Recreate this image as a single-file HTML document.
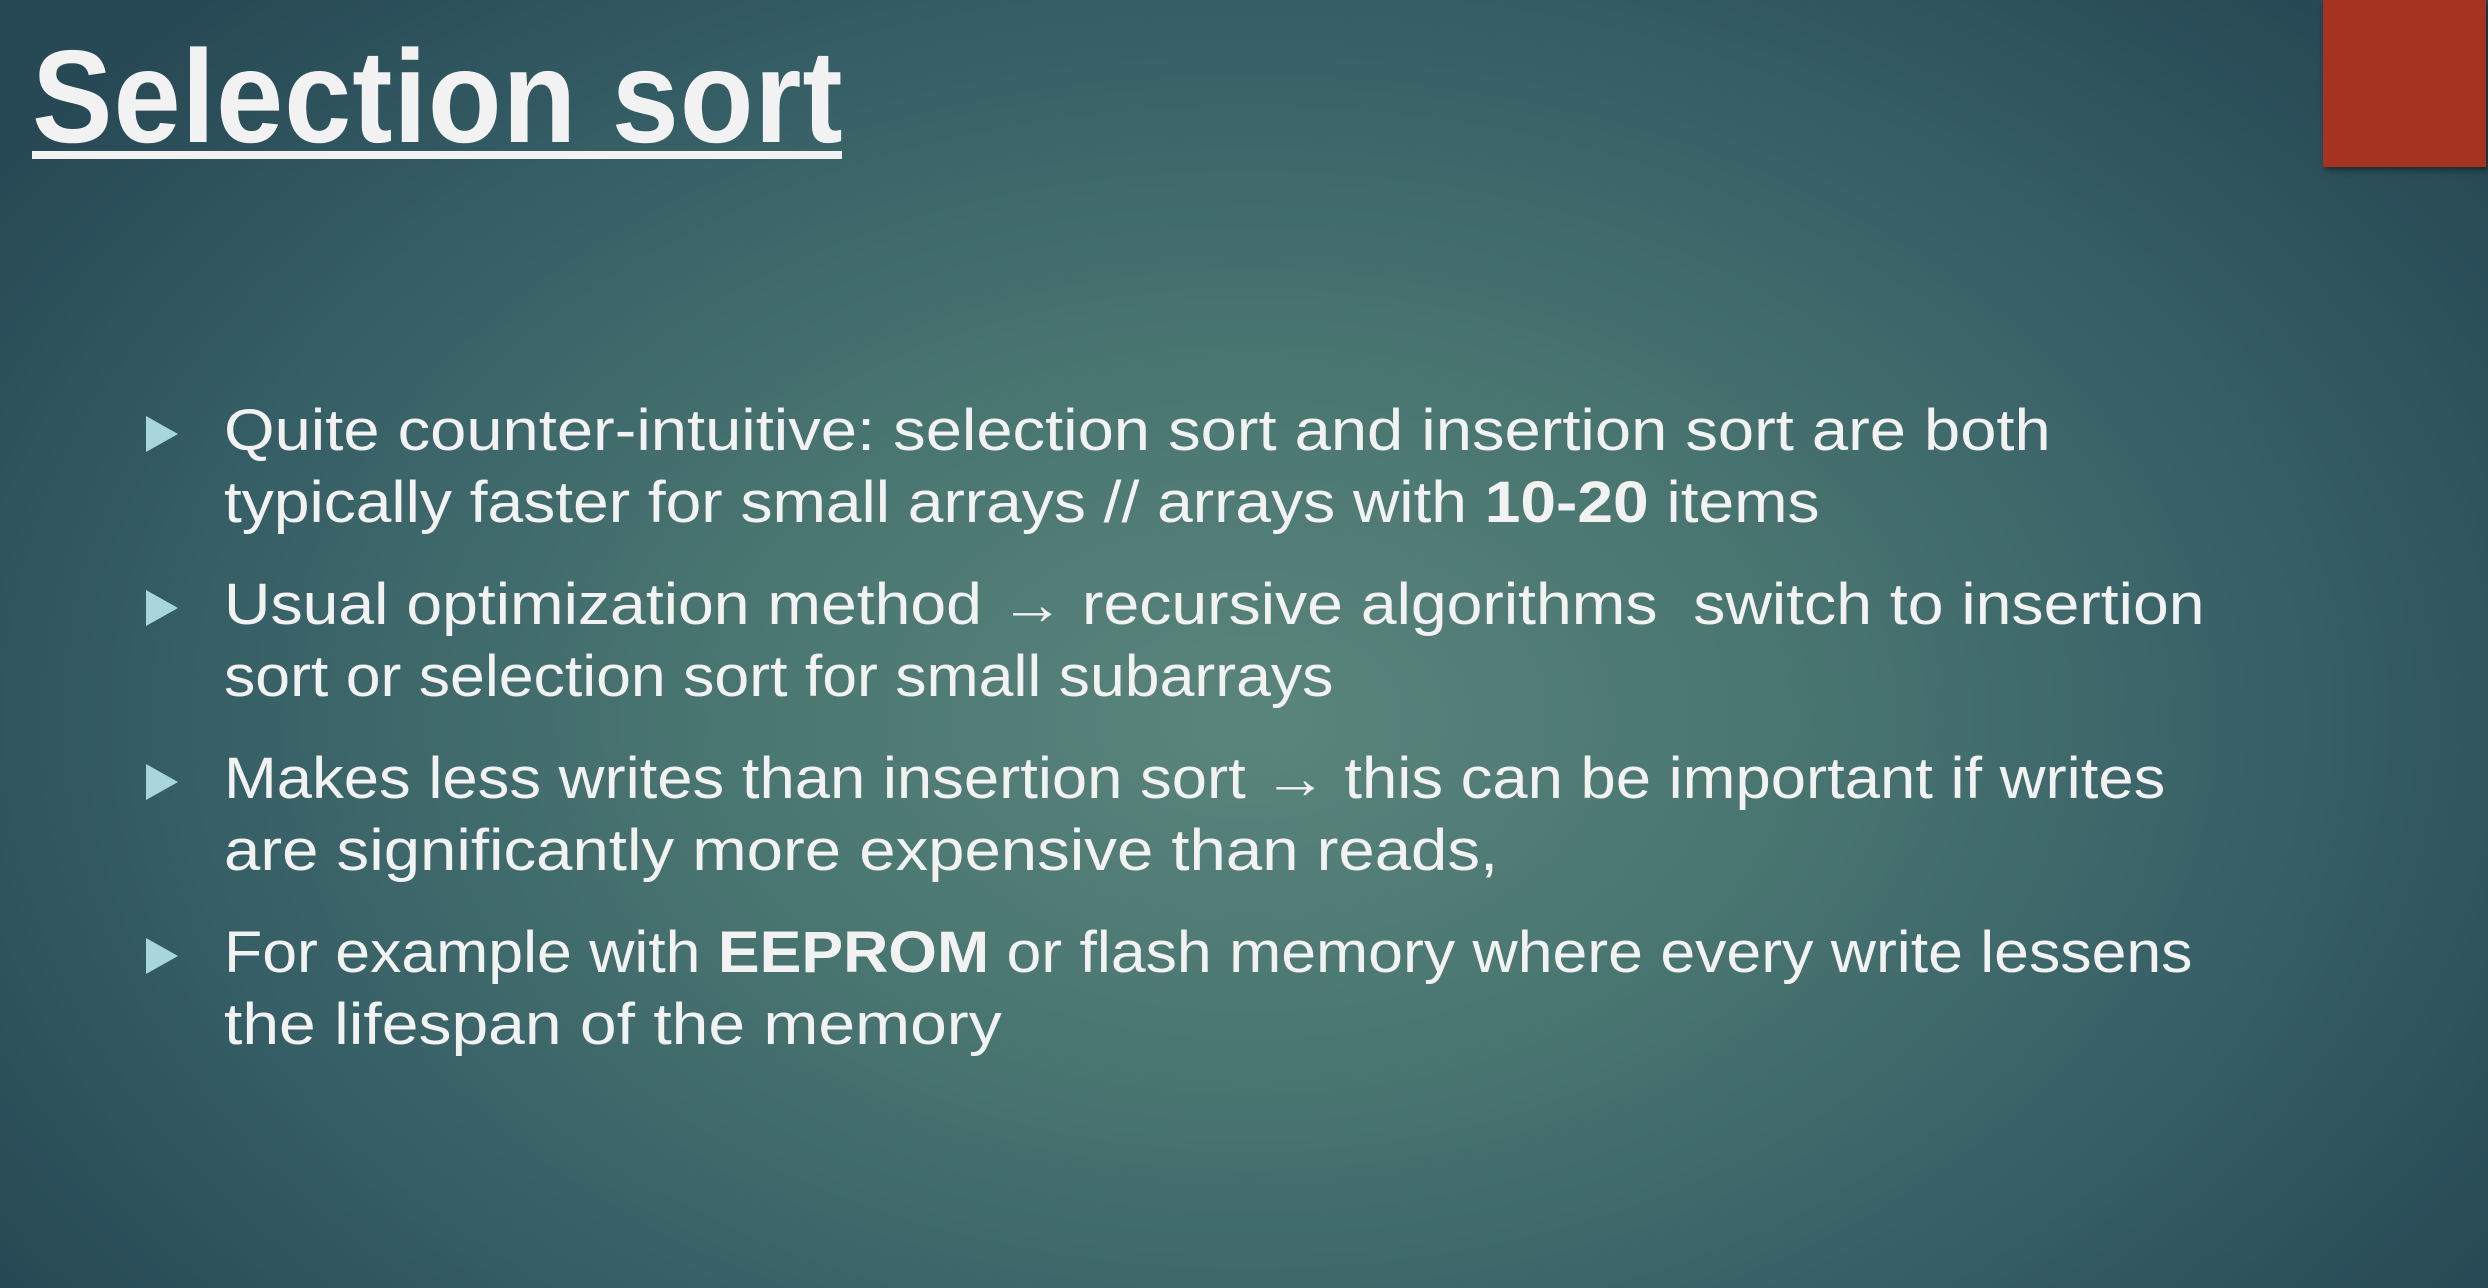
<!DOCTYPE html>
<html><head><meta charset="utf-8"><style>
html,body{margin:0;padding:0}
body{width:2488px;height:1288px;overflow:hidden;position:relative;
background:radial-gradient(ellipse 1500px 1000px at 1250px 720px,#5a857c 0%,#4a7671 35%,#365f66 70%,#274955 100%);
font-family:"Liberation Sans",sans-serif;color:#f2f2f2}
.t{position:absolute;left:32px;top:22px;font-size:132px;line-height:150px;font-weight:bold;white-space:nowrap;letter-spacing:1px;transform:scaleX(0.915);transform-origin:0 0}
.ul{position:absolute;left:32px;top:151px;width:810px;height:8px;background:#f2f2f2}
.red{position:absolute;left:2323px;top:0;width:163px;height:167px;background:#a63321;box-shadow:2px 3px 6px rgba(0,0,0,.45)}
.l{position:absolute;left:224px;font-size:58px;line-height:72px;white-space:nowrap;transform-origin:0 0}
.b{position:absolute;left:146px;width:0;height:0;border-top:18px solid transparent;border-bottom:18px solid transparent;border-left:32px solid #a9d6da}
</style></head><body>
<div class="t">Selection sort</div>
<div class="ul"></div>
<div class="red"></div>
<div class="b" style="top:416px"></div>
<div class="l" style="top:395px;transform:scaleX(1.122)">Quite counter-intuitive: selection sort and insertion sort are both</div>
<div class="l" style="top:467px;transform:scaleX(1.105)">typically faster for small arrays // arrays with <b>10-20</b> items</div>
<div class="b" style="top:590px"></div>
<div class="l" style="top:569px;transform:scaleX(1.109)">Usual optimization method <b>→</b> recursive algorithms&nbsp; switch to insertion</div>
<div class="l" style="top:641px;transform:scaleX(1.079)">sort or selection sort for small subarrays</div>
<div class="b" style="top:764px"></div>
<div class="l" style="top:743px;transform:scaleX(1.093)">Makes less writes than insertion sort <b>→</b> this can be important if writes</div>
<div class="l" style="top:815px;transform:scaleX(1.126)">are significantly more expensive than reads,</div>
<div class="b" style="top:938px"></div>
<div class="l" style="top:917px;transform:scaleX(1.079)">For example with <b>EEPROM</b> or flash memory where every write lessens</div>
<div class="l" style="top:989px;transform:scaleX(1.138)">the lifespan of the memory</div>
</body></html>
